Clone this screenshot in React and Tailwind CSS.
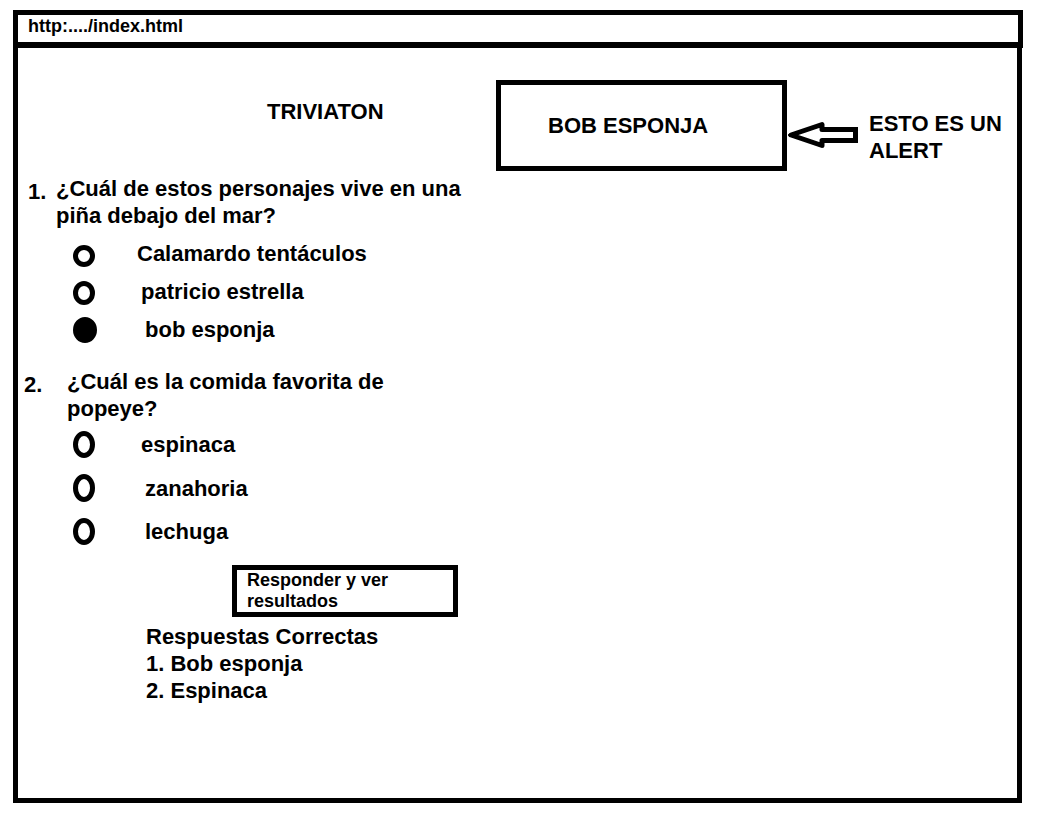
import React from "react";

const questions = [
  {
    id: "q1",
    number: "1.",
    text: "¿Cuál de estos personajes vive en una piña debajo del mar?",
    rowClass: "pl-[10px]",
    numberClass: "w-7",
    textClass: "w-[412px]",
    optionsClass: "gap-[11px] pt-[11px]",
    options: [
      { label: "Calamardo tentáculos", radio: "w-[22px] h-[22px]", gap: "gap-10" },
      { label: "patricio estrella", radio: "w-[22px] h-[24px]", gap: "gap-11" },
      { label: "bob esponja", radio: "w-[24px] h-[26px]", gap: "gap-12", checked: true },
    ],
  },
  {
    id: "q2",
    number: "2.",
    text: "¿Cuál es la comida favorita de popeye?",
    rowClass: "pl-[6px]",
    numberClass: "w-[43px]",
    textClass: "w-[340px]",
    optionsClass: "gap-4 pt-[9px]",
    options: [
      { label: "espinaca", radio: "w-[22px] h-[27px]", gap: "gap-11" },
      { label: "zanahoria", radio: "w-[22px] h-[28px]", gap: "gap-12" },
      { label: "lechuga", radio: "w-[22px] h-[27px]", gap: "gap-12" },
    ],
  },
];

function Question({ q }) {
  return (
    <div role="radiogroup" aria-labelledby={q.id}>
      <div className={`flex items-start ${q.rowClass}`}>
        <span className={`mt-[3px] shrink-0 ${q.numberClass}`}>{q.number}</span>
        <p id={q.id} className={q.textClass}>{q.text}</p>
      </div>
      <div className={`flex flex-col pl-[55px] ${q.optionsClass}`}>
        {q.options.map((o) => (
          <div key={o.label} className={`flex items-end ${o.gap}`}>
            <span className="flex w-6 shrink-0">
              <input
                type="radio"
                id={`${q.id}-${o.label}`}
                name={q.id}
                defaultChecked={o.checked}
                className={`m-0 shrink-0 appearance-none rounded-[50%] border-5 border-black bg-white checked:bg-black ${o.radio}`}
              />
            </span>
            <label htmlFor={`${q.id}-${o.label}`}>{o.label}</label>
          </div>
        ))}
      </div>
    </div>
  );
}

function Arrow() {
  return (
    <svg width="71" height="30" viewBox="0 0 71 30" fill="none" stroke="#000" aria-hidden="true" className="mt-10 shrink-0">
      <path d="M4 15 L35 4.500 V9.500 H68.500 V20.500 H35 V25.500 Z" strokeWidth="5" strokeLinejoin="round" />
      <path d="M1 15 L11 11.500 V18.500 Z" fill="#000" strokeWidth="1" />
      <path d="M64 9.500 H68.500 V20.500 H64" strokeWidth="5" />
    </svg>
  );
}

export default function App() {
  return (
    <div className="bg-white pt-[10px] pr-[14px] pb-3 pl-[13px] font-['Liberation_Sans',Arial,sans-serif] text-[22px] leading-[27px] font-bold text-black">
      <header className="border-5 border-b-6 border-black px-[10px] pb-1 text-[18px] leading-[23px]">
        http:..../index.html
      </header>
      <main className="mr-px border-x-5 border-b-5 border-black pt-8 pb-[94px]">
        <div className="flex items-start">
          <h1 className="w-[478px] shrink-0 pt-[18px] pl-[249px]">TRIVIATON</h1>
          <div role="alert" className="flex h-[91px] w-[291px] shrink-0 items-center border-5 border-black pl-[47px]">
            BOB ESPONJA
          </div>
          <Arrow />
          <p className="pt-[30px] pl-[11px] whitespace-nowrap">
            ESTO ES UN
            <br />
            ALERT
          </p>
        </div>
        <form className="flex flex-col pt-1" onSubmit={(e) => e.preventDefault()}>
          <div className="flex flex-col gap-[25px]">
            {questions.map((q) => (
              <Question key={q.id} q={q} />
            ))}
          </div>
          <button
            type="submit"
            className="mt-5 ml-[214px] w-[226px] border-5 border-black pr-12 pl-[10px] text-left text-[18px] leading-[21px] font-bold"
          >
            Responder y ver resultados
          </button>
        </form>
        <section className="pt-[6px] pl-32">
          <h2>Respuestas Correctas</h2>
          <p>1. Bob esponja</p>
          <p>2. Espinaca</p>
        </section>
      </main>
    </div>
  );
}
